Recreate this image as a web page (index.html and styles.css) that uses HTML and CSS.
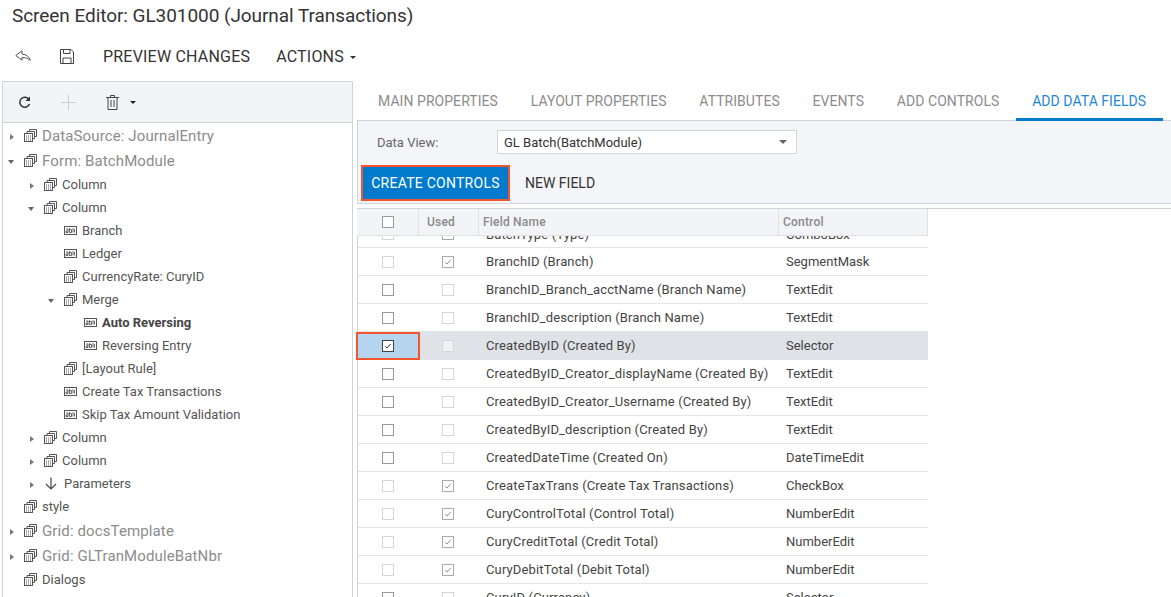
FILE: index.html
```html
<!DOCTYPE html>
<html lang="en">
<head>
<meta charset="utf-8">
<title>Screen Editor</title>
<link rel="stylesheet" href="styles.css">
</head>
<body>
<svg class="defs" width="0" height="0" aria-hidden="true">
  <symbol id="win" viewBox="0 0 13 13">
    <path d="M5.500 2.500V.5h7v7h-2M3 4.500V2.500h7.500v7H8.500" fill="none" stroke="#555"/>
    <rect x=".5" y="4.500" width="8" height="8" fill="#fff" stroke="#555"/>
    <path d="M2 7h5M2 9h5M2 11h5" stroke="#555" stroke-dasharray="1 1"/>
  </symbol>
  <symbol id="abl" viewBox="0 0 13 9">
    <rect x=".5" y=".5" width="12" height="8" fill="#fff" stroke="#555"/>
    <path d="M2 3h2v3.500H2V5h2M5.500 2v4.500h2V3.500h-2M9 2v4.500M10.500 3v3.500" fill="none" stroke="#444" stroke-width=".8"/>
  </symbol>
  <symbol id="chk" viewBox="0 0 12 12">
    <path d="M2.500 6.200l2.300 2.300 4.500-5" fill="none" stroke="currentColor" stroke-width="1.100"/>
  </symbol>
</svg>

<h1 class="title">Screen Editor: GL301000 (Journal Transactions)</h1>

<div class="topbar">
  <svg class="ic-undo" width="16" height="12" viewBox="0 0 16 12"><path d="M7 .8L.8 5.500 7 10.200V7.500c3.200 0 5.800.6 8.300 3-1-3.800-3.800-6-8.300-6.500z" fill="none" stroke="#555"/></svg>
  <svg class="ic-save" width="14" height="15" viewBox="0 0 14 15"><path d="M.5.5h10.500l2.500 2.500v11.500H.5z M3.500.5v4h6.500v-4 M3 14.500v-5.500h8v5.500" fill="none" stroke="#444"/></svg>
  <span class="top-btn preview">PREVIEW CHANGES</span>
  <span class="top-btn">ACTIONS<i class="caret"></i></span>
</div>

<main class="main">
  <section class="left">
    <div class="left-tools">
      <svg width="13" height="13" viewBox="0 0 13 13"><path d="M11 3.500A5 5 0 1 0 11.500 8" fill="none" stroke="#333" stroke-width="1.500"/><path d="M12 .5v4.500H7.500z" fill="#333"/></svg>
      <svg class="t-plus" width="15" height="15" viewBox="0 0 15 15"><path d="M7.500 0v15M0 7.500h15" stroke="#ccc"/></svg>
      <svg class="t-trash" width="13" height="15" viewBox="0 0 13 15"><path d="M0 2.500h13M4.500 2.500V.5h4v2M2 2.500v12h9v-12M5 5v7M8 5v7" fill="none" stroke="#444"/></svg>
      <i class="caret dark"></i>
    </div>
    <ul class="tree">
      <li class="node root"><i class="arr r"></i><svg class="ico"><use href="#win"/></svg><span>DataSource: JournalEntry</span></li>
      <li class="node root"><i class="arr d"></i><svg class="ico"><use href="#win"/></svg><span>Form: BatchModule</span></li>
      <li class="node l1"><i class="arr r"></i><svg class="ico"><use href="#win"/></svg><span>Column</span></li>
      <li class="node l1"><i class="arr d"></i><svg class="ico"><use href="#win"/></svg><span>Column</span></li>
      <li class="node l2"><i class="arr"></i><svg class="ico ab"><use href="#abl"/></svg><span>Branch</span></li>
      <li class="node l2"><i class="arr"></i><svg class="ico ab"><use href="#abl"/></svg><span>Ledger</span></li>
      <li class="node l2"><i class="arr"></i><svg class="ico"><use href="#win"/></svg><span>CurrencyRate: CuryID</span></li>
      <li class="node l2"><i class="arr d"></i><svg class="ico"><use href="#win"/></svg><span>Merge</span></li>
      <li class="node l3"><i class="arr"></i><svg class="ico ab"><use href="#abl"/></svg><b>Auto Reversing</b></li>
      <li class="node l3"><i class="arr"></i><svg class="ico ab"><use href="#abl"/></svg><span>Reversing Entry</span></li>
      <li class="node l2"><i class="arr"></i><svg class="ico"><use href="#win"/></svg><span>[Layout Rule]</span></li>
      <li class="node l2"><i class="arr"></i><svg class="ico ab"><use href="#abl"/></svg><span>Create Tax Transactions</span></li>
      <li class="node l2"><i class="arr"></i><svg class="ico ab"><use href="#abl"/></svg><span>Skip Tax Amount Validation</span></li>
      <li class="node l1"><i class="arr r"></i><svg class="ico"><use href="#win"/></svg><span>Column</span></li>
      <li class="node l1"><i class="arr r"></i><svg class="ico"><use href="#win"/></svg><span>Column</span></li>
      <li class="node l1"><i class="arr r"></i><svg class="ico param" viewBox="0 0 14 13"><path d="M7 .5v11M2 7l5 5 5-5" fill="none" stroke="#444" stroke-width="1.200"/></svg><span>Parameters</span></li>
      <li class="node"><i class="arr"></i><svg class="ico"><use href="#win"/></svg><span>style</span></li>
      <li class="node root"><i class="arr r"></i><svg class="ico"><use href="#win"/></svg><span>Grid: docsTemplate</span></li>
      <li class="node root"><i class="arr r"></i><svg class="ico"><use href="#win"/></svg><span>Grid: GLTranModuleBatNbr</span></li>
      <li class="node"><i class="arr"></i><svg class="ico"><use href="#win"/></svg><span>Dialogs</span></li>
    </ul>
  </section>

  <section class="right">
    <nav class="tabs">
      <span class="tab">MAIN PROPERTIES</span>
      <span class="tab">LAYOUT PROPERTIES</span>
      <span class="tab">ATTRIBUTES</span>
      <span class="tab">EVENTS</span>
      <span class="tab">ADD CONTROLS</span>
      <span class="tab active">ADD DATA FIELDS</span>
    </nav>
    <div class="panel">
      <div class="view-row">
        <label class="view-label">Data View:</label>
        <div class="select">GL Batch(BatchModule)<i class="caret grey"></i></div>
      </div>
      <div class="btn-row">
        <span class="btn-create">CREATE CONTROLS</span>
        <span class="btn-new">NEW FIELD</span>
      </div>
    </div>
    <div class="grid">
      <div class="head">
        <div class="c c1"><i class="box strong"></i></div>
        <div class="c c2">Used</div>
        <div class="c c3">Field Name</div>
        <div class="c c4">Control</div>
      </div>
      <div class="body">
        <div class="row first"><div class="c c1"><i class="box"></i></div><div class="c c2"><i class="box on"><svg><use href="#chk"/></svg></i></div><div class="c c3">BatchType (Type)</div><div class="c c4">ComboBox</div></div>
        <div class="row"><div class="c c1"><i class="box"></i></div><div class="c c2"><i class="box on"><svg><use href="#chk"/></svg></i></div><div class="c c3">BranchID (Branch)</div><div class="c c4">SegmentMask</div></div>
        <div class="row"><div class="c c1"><i class="box strong"></i></div><div class="c c2"><i class="box"></i></div><div class="c c3">BranchID_Branch_acctName (Branch Name)</div><div class="c c4">TextEdit</div></div>
        <div class="row"><div class="c c1"><i class="box strong"></i></div><div class="c c2"><i class="box"></i></div><div class="c c3">BranchID_description (Branch Name)</div><div class="c c4">TextEdit</div></div>
        <div class="row sel"><div class="c c1 mark"><i class="box dark"><svg><use href="#chk"/></svg></i></div><div class="c c2"><i class="box"></i></div><div class="c c3">CreatedByID (Created By)</div><div class="c c4">Selector</div></div>
        <div class="row"><div class="c c1"><i class="box strong"></i></div><div class="c c2"><i class="box"></i></div><div class="c c3">CreatedByID_Creator_displayName (Created By)</div><div class="c c4">TextEdit</div></div>
        <div class="row"><div class="c c1"><i class="box strong"></i></div><div class="c c2"><i class="box"></i></div><div class="c c3">CreatedByID_Creator_Username (Created By)</div><div class="c c4">TextEdit</div></div>
        <div class="row"><div class="c c1"><i class="box strong"></i></div><div class="c c2"><i class="box"></i></div><div class="c c3">CreatedByID_description (Created By)</div><div class="c c4">TextEdit</div></div>
        <div class="row"><div class="c c1"><i class="box strong"></i></div><div class="c c2"><i class="box"></i></div><div class="c c3">CreatedDateTime (Created On)</div><div class="c c4">DateTimeEdit</div></div>
        <div class="row"><div class="c c1"><i class="box"></i></div><div class="c c2"><i class="box on"><svg><use href="#chk"/></svg></i></div><div class="c c3">CreateTaxTrans (Create Tax Transactions)</div><div class="c c4">CheckBox</div></div>
        <div class="row"><div class="c c1"><i class="box"></i></div><div class="c c2"><i class="box on"><svg><use href="#chk"/></svg></i></div><div class="c c3">CuryControlTotal (Control Total)</div><div class="c c4">NumberEdit</div></div>
        <div class="row"><div class="c c1"><i class="box"></i></div><div class="c c2"><i class="box on"><svg><use href="#chk"/></svg></i></div><div class="c c3">CuryCreditTotal (Credit Total)</div><div class="c c4">NumberEdit</div></div>
        <div class="row"><div class="c c1"><i class="box"></i></div><div class="c c2"><i class="box on"><svg><use href="#chk"/></svg></i></div><div class="c c3">CuryDebitTotal (Debit Total)</div><div class="c c4">NumberEdit</div></div>
        <div class="row"><div class="c c1"><i class="box strong"></i></div><div class="c c2"><i class="box"></i></div><div class="c c3">CuryID (Currency)</div><div class="c c4">Selector</div></div>
      </div>
    </div>
  </section>
</main>
</body>
</html>
```

FILE: styles.css
```css
* { box-sizing: border-box; }
html, body { margin: 0; height: 597px; overflow: hidden; background: #fff; }
body { font-family: Roboto, "Liberation Sans", sans-serif; color: #333; font-size: 13px; }
.defs { position: absolute; }

.title { margin: 0; padding: 5px 0 0 12px; height: 40px; font-size: 19px; line-height: 21px; font-weight: 400; letter-spacing: -.06px; color: #333; }

.topbar { display: flex; align-items: center; height: 32px; padding-left: 15px; font-size: 16px; letter-spacing: .2px; color: #333; }
.ic-undo { margin-right: 29px; }
.ic-save { margin-right: 29px; }
.top-btn.preview { margin-right: 26px; }
.caret { display: inline-block; margin-left: 6px; vertical-align: middle; border: 3.500px solid transparent; border-top: 3.500px solid #333; border-bottom: 0; }
.caret.dark { margin-left: 11px; border-top-color: #222; }
.caret.grey { margin-left: 0; border-top-color: #666; border-width: 4px 4px 0; }

.main { display: flex; height: 516px; margin-top: 9px; padding-left: 2px; }

.left { width: 351px; flex: none; border: 1px solid #d0d3d8; border-bottom: 0; }
.left-tools { display: flex; align-items: center; height: 41px; padding-left: 15px; background: #f3f4f7; border-bottom: 1px solid #d0d3d8; }
.t-plus { margin-left: 30px; }
.t-trash { margin-left: 30px; }

.tree { list-style: none; margin: 0; padding: 0; }
.node { display: flex; align-items: center; height: 23px; padding-left: 5px; font-size: 13px; color: #555; }
.node.root { height: 25px; font-size: 15px; letter-spacing: .12px; color: #8c8c8c; }
.node.l1 { padding-left: 25px; }
.node.l2 { padding-left: 45px; }
.node.l3 { padding-left: 65px; }
.node b { font-weight: 700; color: #444; }
.arr { width: 16px; height: 9px; flex: none; display: block; position: relative; }
.arr.r::before { content: ""; position: absolute; left: 2px; top: 2.500px; border-left: 4px solid #777; border-top: 3.500px solid transparent; border-bottom: 3.500px solid transparent; }
.arr.d::before { content: ""; position: absolute; left: 0; top: 4px; border-top: 4px solid #666; border-left: 3.500px solid transparent; border-right: 3.500px solid transparent; }
.ico { width: 13px; height: 13px; flex: none; margin-right: 5px; }
.ico.ab { height: 9px; }
.ico.param { width: 14px; margin-right: 6px; }

.right { flex: 1; min-width: 0; margin-left: 4px; display: flex; flex-direction: column; }
.tabs { display: flex; height: 40px; padding-left: 5px; flex: none; }
.tab { padding: 12px 16.400px 0 16.400px; height: 40px; border-bottom: 3px solid transparent; font-size: 14px; letter-spacing: .05px; color: #8c8c8c; white-space: nowrap; position: relative; z-index: 1; }
.tab:first-child { padding-left: 16px; }
.tab.active { color: #1f87d6; border-bottom-color: #007acc; }

.panel { height: 84px; flex: none; margin-top: -1px; background: #f4f5f8; border: 1px solid #d0d3d8; border-right: 0; }
.view-row { display: flex; align-items: center; height: 44px; padding: 0 0 2px 19px; }
.view-label { width: 120px; font-size: 13px; color: #666; }
.select { display: flex; align-items: center; justify-content: space-between; width: 300px; height: 24px; padding: 0 9px 0 6px; background: #fff; border: 1px solid #d4d6da; font-size: 13px; color: #333; }
.btn-row { display: flex; align-items: center; padding-left: 3px; }
.btn-create { display: flex; align-items: center; justify-content: center; width: 149px; height: 36px; background: #007acc; border: 2px solid #f4552e; color: #fff; font-size: 14px; font-weight: 400; letter-spacing: .25px; }
.btn-new { margin-left: 15px; font-size: 14px; color: #333; }

.grid { margin-top: 4px; border-top: 1px solid #d0d3d8; position: relative; flex: 1; min-height: 0; display: flex; flex-direction: column; }
.grid::before { content: ""; position: absolute; left: 0; top: 0; bottom: 0; width: 1px; background: #d0d3d8; }
.head, .row { display: grid; grid-template-columns: 61px 60px 300px 150px; width: 571px; }
.head { height: 27px; background: #f3f4f7; border-bottom: 1px solid #dfe1e5; border-right: 1px solid #dfe1e5; color: #8a8a8a; font-weight: 500; position: relative; z-index: 1; flex: none; }
.c { display: flex; align-items: center; min-width: 0; white-space: nowrap; }
.head .c { font-size: 12px; letter-spacing: .2px; padding-left: 4px; }
.head .c + .c { border-left: 1px solid #dfe1e5; }
.head .c1 { justify-content: center; padding: 0 0 0 1px; }
.head .c2 { padding-left: 8px; }
.head .c3 { padding-left: 4px; }
.body { flex: 1; min-height: 0; }
.row { height: 28px; border-bottom: 1px solid #e3e5e8; font-size: 13px; color: #444; }
.row.first { height: 12px; align-items: end; overflow: hidden; }
.row.first .c { height: 28px; margin-top: -16px; }
.row .c1, .row .c2 { justify-content: center; }
.row .c1 { padding-left: 1px; }
.row .c3, .row .c4 { padding-left: 8px; }
.row .c3 { letter-spacing: .14px; }
.row.sel { background: #dfe2e7; border-bottom-color: #dfe2e7; }
.row.sel .c2 .box { background: #f0f1f3; }
.c1.mark { position: relative; background: #b5d5ee; margin-left: 1px; margin-bottom: -1px; padding-left: 0; }
.c1.mark::after { content: ""; position: absolute; left: -2px; right: -2px; top: 0; bottom: 0; border: 2px solid #f4552e; }
.box { display: block; width: 12px; height: 12px; border: 1px solid #d5d6d8; background: #fff; color: #888; }
.box.strong { border-color: #999; }
.box.on { border-color: #a9a9a9; }
.box.dark { border-color: #444; color: #222; }
.box svg { display: block; width: 10px; height: 10px; }
```
